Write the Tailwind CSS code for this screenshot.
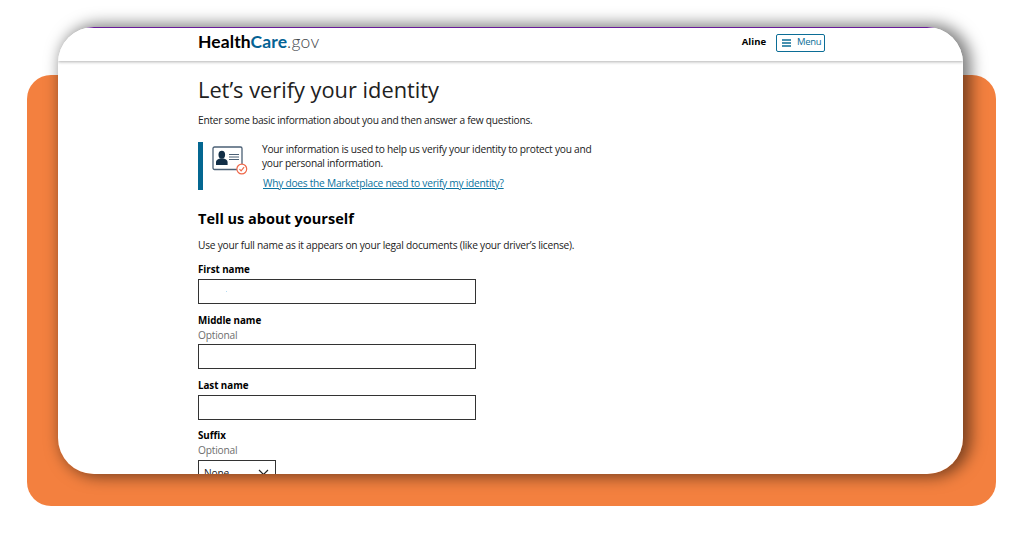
<!DOCTYPE html>
<html lang="en">
<head>
    <meta charset="UTF-8">
    <meta name="viewport" content="width=device-width, initial-scale=1.0">
    <title>HealthCare.gov - Verify your identity</title>
    <script src="https://cdn.jsdelivr.net/npm/@tailwindcss/browser@4"></script>
</head>
<body class="bg-white h-[536px] overflow-hidden pt-[75px] pl-[27px] font-['Open_Sans','Noto_Sans',sans-serif] text-[#212121]">

    <!-- Orange backdrop -->
    <div class="flex items-start w-[969px] h-[431px] rounded-3xl bg-[#f3803f]">

        <!-- Page card -->
        <div class="-mt-12 ml-[31px] w-[905px] h-[447px] shrink-0 rounded-[36px] shadow-[5px_0px_15px_3px_rgba(0,0,0,0.5)]">
            <div class="h-full overflow-hidden rounded-[36px] bg-white">

                <!-- Header -->
                <header class="flex items-center justify-between h-[34px] pl-[140px] pr-[138px] pb-[4px] border-t border-[#6a1b9a] shadow-[0_1px_3px_rgba(0,0,0,0.3)]">
                    <div class="pb-[2px] font-[Lato,sans-serif] text-[17.5px] leading-5 whitespace-nowrap"><span class="font-bold text-black tracking-[0.1px]">Health</span><span class="font-bold text-[#046294] tracking-[0.1px]">Care</span><span class="font-light text-[#45484b] tracking-[0.3px]">.gov</span></div>
                    <div class="flex items-center gap-[10px]">
                        <span class="text-[9.5px] font-bold text-black">Aline</span>
                        <button class="flex items-center gap-[6px] w-[49px] h-[18px] pl-[5px] rounded-xs border border-[#0b6d96] text-[9.5px] tracking-[-0.3px] text-[#0b6d96]">
                            <svg class="w-[9px] h-2" viewBox="0 0 9 8" fill="none" stroke="currentColor" stroke-width="1.5">
                                <path d="M0 1h9M0 4h9M0 7h9"/>
                            </svg>
                            Menu
                        </button>
                    </div>
                </header>

                <main class="pt-[14px] pl-[140px]">
                    <h1 class="text-[21.8px] leading-[30px]">Let’s verify your identity</h1>
                    <p class="mt-2 text-[10.2px] tracking-[-0.26px] leading-[14px]">Enter some basic information about you and then answer a few questions.</p>

                    <!-- Callout -->
                    <div class="flex mt-[15px] h-12 border-l-[5px] border-[#046791]">
                        <svg class="ml-[9px] mt-1 w-9 h-[30px] shrink-0" viewBox="0 0 36 30" fill="none">
                            <rect x="1" y="1" width="29" height="22.5" rx="1.5" stroke="#4b6075" stroke-width="1.3"/>
                            <ellipse cx="9.8" cy="8.8" rx="3.3" ry="4" fill="#112e46"/>
                            <path d="M4 19v-3c0-2.2 2-2.7 4-3.5h3.6c2 .8 4 1.3 4 3.5v3z" fill="#112e46"/>
                            <path d="M17 8.5h10M17 11h10M17 13.5h10" stroke="#4b6075"/>
                            <circle cx="29.8" cy="23" r="4.9" fill="#fff" stroke="#ef6a4c" stroke-width="1.2"/>
                            <path d="M27.5 23.2l1.6 1.6 3-3.7" stroke="#ef6a4c" stroke-width="1.2"/>
                        </svg>
                        <div class="ml-[14px] text-[10.2px] tracking-[-0.25px]">
                            <p class="leading-[14.4px]">Your information is used to help us verify your identity to protect you and<br>your personal information.</p>
                            <a href="#" class="block mt-[5px] ml-px leading-[14px] text-[#0b73a0] underline">Why does the Marketplace need to verify my identity?</a>
                        </div>
                    </div>

                    <h2 class="mt-[19px] text-[14.5px] leading-5 font-bold text-black">Tell us about yourself</h2>
                    <p class="mt-[9px] text-[10.2px] tracking-[-0.24px] leading-[14px]">Use your full name as it appears on your legal documents (like your driver’s license).</p>

                    <!-- Name fields -->
                    <form class="w-[278px] text-[9.8px] leading-[14px]">
                        <label for="first" class="block mt-[11px] font-bold text-black tracking-[-0.05px]">First name</label>
                        <div id="first" class="mt-[2px] h-[25px] pt-[11px] pl-[27px] border border-[#333]">
                            <span class="block size-px bg-[#b5dcf3]"></span>
                        </div>

                        <label for="middle" class="block mt-[10px] font-bold text-black tracking-[-0.05px]">Middle name</label>
                        <span class="block text-[10.2px] tracking-[-0.2px] text-[#6e6e6e]">Optional</span>
                        <input id="middle" type="text" class="block mt-[2px] w-full h-[25px] border border-[#333]">

                        <label for="last" class="block mt-[10px] font-bold text-black tracking-[-0.05px]">Last name</label>
                        <input id="last" type="text" class="block mt-[2px] w-full h-[25px] border border-[#333]">

                        <label for="suffix" class="block mt-[9px] font-bold text-black tracking-[-0.05px]">Suffix</label>
                        <span class="block text-[10.2px] tracking-[-0.2px] text-[#6e6e6e]">Optional</span>
                        <button id="suffix" type="button" class="flex items-center justify-between mt-[3px] w-[78px] h-[25px] pl-[5px] pr-[6px] border border-[#333] text-[10.2px] tracking-[-0.2px]">
                            None
                            <svg class="w-[11px] h-[7px]" viewBox="0 0 11 7" fill="none" stroke="#222" stroke-width="1.2">
                                <path d="M1 1l4.5 4.5L10 1"/>
                            </svg>
                        </button>
                    </form>
                </main>
            </div>
        </div>
    </div>

</body>
</html>
